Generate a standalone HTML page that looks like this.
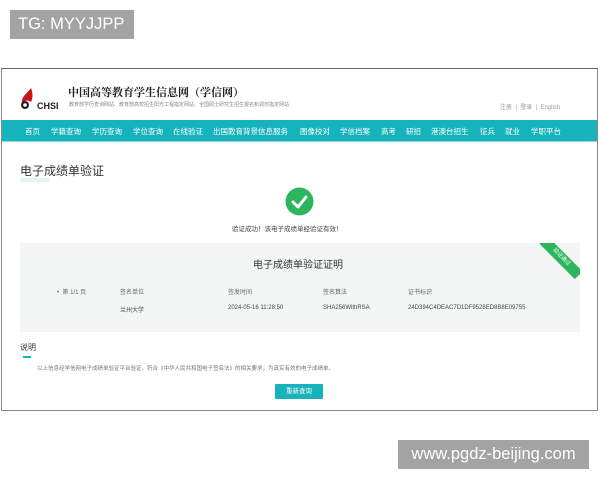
<!DOCTYPE html><html><head><meta charset="utf-8"><style>
*{margin:0;padding:0;box-sizing:border-box}
body{width:600px;height:480px;background:#fff;position:relative;overflow:hidden;font-family:"Liberation Sans","Noto Sans CJK SC",sans-serif;color:#333}
.a{position:absolute;white-space:nowrap}
.tag{background:#a3a3a3;color:#fff;font-size:16.5px;line-height:29px;padding:0 8px}
.frame{left:1px;top:68px;width:597px;height:343px;border:1px solid #888;border-top-color:#666}
.nav{left:2px;top:120px;width:595px;height:22px;background:#17b3bd;border-bottom:1px solid #8dd8dc}
.nav span{position:absolute;top:6px;color:#fff;font-size:7.5px}
.s{font-size:6px;color:#666}
</style></head><body>
<div class="a tag" style="left:10px;top:10px;width:124px">TG: MYYJJPP</div>
<div class="a tag" style="left:398px;top:440px;width:191px;text-align:center;padding:0">www.pgdz-beijing.com</div>
<div class="a frame"></div>
<svg class="a" style="left:19px;top:88px" width="22" height="22" viewBox="0 0 22 22"><path d="M12 0 C8 6 2 8 3 16 C5 12 9 12 12 14 C14 10 14 5 12 0Z" fill="#c4161c"/><circle cx="6" cy="17" r="4" fill="#222"/><circle cx="6" cy="17" r="1.8" fill="#fff"/></svg>
<div class="a" style="left:37px;top:101px;font-size:9px;font-weight:bold;color:#222">CHSI</div>
<div class="a" style="left:68px;top:84px;font-size:11px;font-weight:bold;color:#222;font-family:'Noto Serif CJK SC',serif">中国高等教育学生信息网（学信网）</div>
<div class="a" style="left:69px;top:101px;font-size:5px;color:#888">教育部学历查询网站、教育部高校招生阳光工程指定网站、全国硕士研究生招生报名和调剂指定网站</div>
<div class="a" style="left:500px;top:102px;font-size:6px;color:#999">注册 &nbsp;|&nbsp; 登录 &nbsp;|&nbsp; English</div>
<div class="a nav"><span style="left:23px">首页</span><span style="left:49px">学籍查询</span><span style="left:90px">学历查询</span><span style="left:131px">学位查询</span><span style="left:171px">在线验证</span><span style="left:211px">出国教育背景信息服务</span><span style="left:298px">图像校对</span><span style="left:338px">学信档案</span><span style="left:379px">高考</span><span style="left:404px">研招</span><span style="left:429px">港澳台招生</span><span style="left:478px">征兵</span><span style="left:503px">就业</span><span style="left:529px">学职平台</span></div>
<div class="a" style="left:20px;top:162px;font-size:12px;color:#333">电子成绩单验证</div>
<div class="a" style="left:20px;top:178px;width:30px;height:4px;background:#e4f4f6;border-radius:2px"></div>
<svg class="a" style="left:285px;top:187px" width="29" height="29"><circle cx="14.5" cy="14.5" r="14" fill="#2db55d"/><path d="M8 15 L13 20 L21 10" stroke="#fff" stroke-width="3" fill="none" stroke-linecap="round" stroke-linejoin="round"/></svg>
<div class="a" style="left:232px;top:223px;font-size:6.5px;color:#444">验证成功！该电子成绩单经验证有效！</div>
<div class="a" style="left:20px;top:243px;width:560px;height:89px;background:#f4f6f6;overflow:hidden">
<div class="a" style="left:516px;top:9px;width:50px;height:11px;background:#2db55d;transform:rotate(45deg);color:#fff;font-size:5.5px;text-align:center;line-height:11px">验证通过</div></div>
<div class="a" style="left:253px;top:256px;font-size:10px;color:#333">电子成绩单验证证明</div>
<div class="a s" style="left:57px;top:287px">•&nbsp; 第 1/1 页</div>
<div class="a s" style="left:120px;top:287px">签名单位</div>
<div class="a s" style="left:228px;top:287px">签发时间</div>
<div class="a s" style="left:323px;top:287px">签名算法</div>
<div class="a s" style="left:408px;top:287px">证书标识</div>
<div class="a s" style="left:120px;top:305px;color:#444">兰州大学</div>
<div class="a s" style="left:228px;top:305px;color:#444">2024-05-16 11:28:50</div>
<div class="a s" style="left:323px;top:305px;color:#444">SHA256WithRSA</div>
<div class="a s" style="left:408px;top:305px;color:#444">24D394C4DEAC7D1DF9528ED8B8E09755</div>
<div class="a" style="left:20px;top:342px;font-size:8px;color:#333">说明</div>
<div class="a" style="left:23px;top:356px;width:8px;height:1.5px;background:#17b3bd"></div>
<div class="a" style="left:37px;top:364px;font-size:5.5px;color:#777">以上信息经学信网电子成绩单验证平台验证，符合《中华人民共和国电子签名法》的相关要求，为真实有效的电子成绩单。</div>
<div class="a" style="left:275px;top:384px;width:48px;height:15px;background:#17b3bd;color:#fff;font-size:6.5px;text-align:center;line-height:15px;border-radius:1px">重新查询</div>
</body></html>
